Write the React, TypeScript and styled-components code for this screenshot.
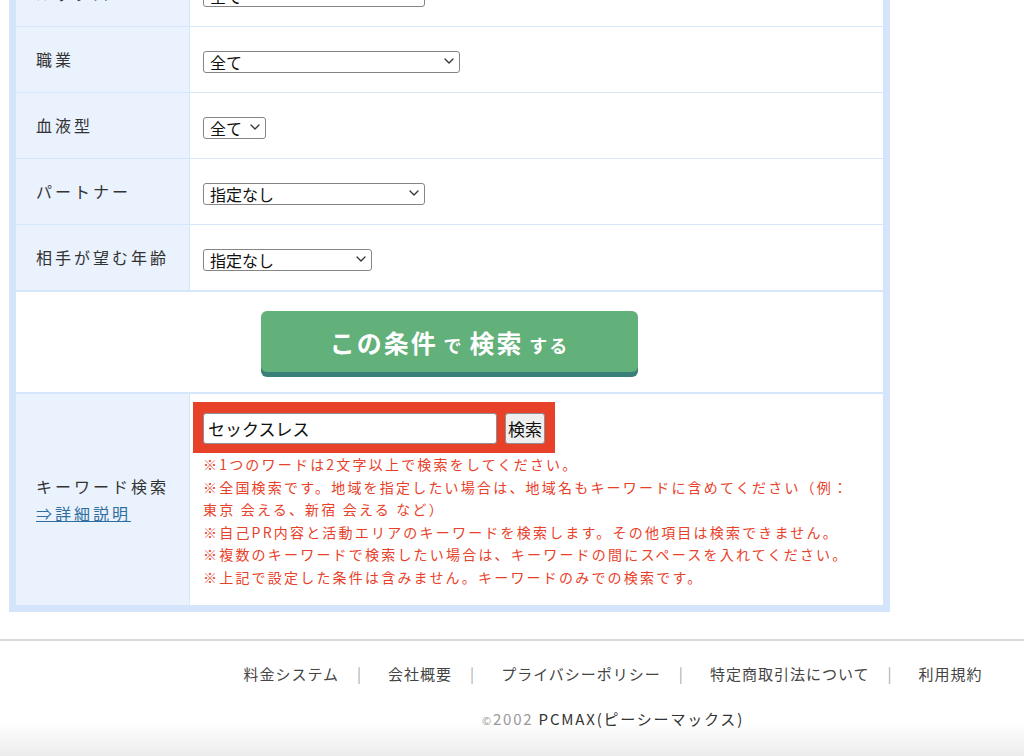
import React from 'react';
import styled, { createGlobalStyle } from 'styled-components';

const GlobalStyle = createGlobalStyle`
    body {
        margin: 0;
        background: #fff;
        color: #333;
        font-family: "Noto Sans CJK JP", "Noto Sans", sans-serif;
        overflow: hidden;
    }
`;

type Field = { label: string; value: string; width: number };

const fields: Field[] = [
    { label: 'ルックス', value: '全て', width: 222 },
    { label: '職業', value: '全て', width: 257 },
    { label: '血液型', value: '全て', width: 63 },
    { label: 'パートナー', value: '指定なし', width: 222 },
    { label: '相手が望む年齢', value: '指定なし', width: 169 },
];

const notes = [
    '※1つのワードは2文字以上で検索をしてください。',
    '※全国検索です。地域を指定したい場合は、地域名もキーワードに含めてください（例：東京 会える、新宿 会える など）',
    '※自己PR内容と活動エリアのキーワードを検索します。その他項目は検索できません。',
    '※複数のキーワードで検索したい場合は、キーワードの間にスペースを入れてください。',
    '※上記で設定した条件は含みません。キーワードのみでの検索です。',
];

const footerLinks = ['料金システム', '会社概要', 'プライバシーポリシー', '特定商取引法について', '利用規約'];

const Chevron = () => (
    <svg width="10" height="6" viewBox="0 0 10 6" fill="none">
        <path d="M1 1l4 4 4-4" stroke="#333" strokeWidth="1.3" strokeLinecap="round" strokeLinejoin="round" />
    </svg>
);

const App = () => {
    return (
        <>
            <GlobalStyle />
            <Main>
                <Table>
                    {fields.map((f, i) => (
                        <Row key={f.label} $line={i === fields.length - 1 ? 2 : 1}>
                            <Label>{f.label}</Label>
                            <Value>
                                <SelectWrap $w={f.width}>
                                    <Select defaultValue={f.value}>
                                        <option>{f.value}</option>
                                    </Select>
                                    <ChevronBox>
                                        <Chevron />
                                    </ChevronBox>
                                </SelectWrap>
                            </Value>
                        </Row>
                    ))}
                    <ButtonRow>
                        <SearchButton type="button">
                            <Big>この条件</Big> <Small>で</Small> <Big>検索</Big> <Small>する</Small>
                        </SearchButton>
                    </ButtonRow>
                    <Row $line={0}>
                        <Label>
                            <span>キーワード検索</span>
                            <HelpLink href="#">⇒詳細説明</HelpLink>
                        </Label>
                        <KeywordValue>
                            <Highlight onSubmit={(e) => e.preventDefault()}>
                                <KeywordInput defaultValue="セックスレス" />
                                <GrayButton type="submit">検索</GrayButton>
                            </Highlight>
                            <Notes>
                                {notes.map((n) => (
                                    <li key={n}>{n}</li>
                                ))}
                            </Notes>
                        </KeywordValue>
                    </Row>
                </Table>
            </Main>
            <Footer>
                <FooterLinks>
                    {footerLinks.map((l, i) => (
                        <React.Fragment key={l}>
                            {i > 0 && <Sep>|</Sep>}
                            <FooterLink href="#">{l}</FooterLink>
                        </React.Fragment>
                    ))}
                </FooterLinks>
                <Copyright>
                    <Muted>
                        <CopyMark>©</CopyMark>2002
                    </Muted>{' '}
                    PCMAX(ピーシーマックス)
                </Copyright>
            </Footer>
        </>
    );
};

const Main = styled.main`
    margin-top: -46px;
    padding-left: 9px;
`;

const Table = styled.div`
    width: 881px;
    box-sizing: border-box;
    border: 7px solid #d3e4fb;
    background: #fff;
`;

const Row = styled.div<{ $line: number }>`
    display: flex;
    min-height: 65px;
    border-bottom: ${(p) => p.$line}px solid #d6e6fb;
`;

const Label = styled.div`
    width: 174px;
    flex-shrink: 0;
    box-sizing: border-box;
    padding-left: 20px;
    background: #eaf2fd;
    border-right: 1px solid #d6e6fb;
    display: flex;
    flex-direction: column;
    justify-content: center;
    font-size: 16px;
    line-height: 27px;
    letter-spacing: 3px;
    color: #333;
`;

const Value = styled.div`
    flex: 1;
    display: flex;
    align-items: center;
    padding: 2px 12px 0 13px;
`;

const SelectWrap = styled.span<{ $w: number }>`
    position: relative;
    display: inline-block;
    width: ${(p) => p.$w}px;
    height: 22px;
`;

const Select = styled.select`
    appearance: none;
    width: 100%;
    height: 22px;
    box-sizing: border-box;
    margin: 0;
    padding: 0 22px 0 6px;
    border: 1px solid #858585;
    border-radius: 3px;
    background: #fff;
    color: #111;
    font-family: inherit;
    font-size: 16px;
    line-height: 20px;
`;

const ChevronBox = styled.span`
    position: absolute;
    right: 6px;
    top: 8px;
    display: flex;
    pointer-events: none;
`;

const ButtonRow = styled.div`
    display: flex;
    justify-content: center;
    padding: 19px 0 15px;
    border-bottom: 2px solid #d6e6fb;
`;

const SearchButton = styled.button`
    width: 377px;
    height: 61px;
    margin-bottom: 5px;
    border: none;
    border-radius: 6px;
    background: #62b07a;
    box-shadow: 0 5px 0 #3b7f7b;
    color: #fff;
    font-family: inherit;
    font-weight: 700;
    font-size: 17px;
    letter-spacing: 2px;
    cursor: pointer;
`;

const Big = styled.span`
    font-size: 25px;
`;

const Small = styled.span`
    font-size: 18px;
`;

const HelpLink = styled.a`
    color: #2e6fa0;
    text-decoration: underline;
`;

const KeywordValue = styled.div`
    flex: 1;
    padding: 8px 25px 17px 3px;
`;

const Highlight = styled.form`
    display: flex;
    width: max-content;
    gap: 8px;
    margin: 0;
    padding: 11px 10px 9px;
    background: #e8412a;
`;

const KeywordInput = styled.input`
    width: 294px;
    height: 31px;
    box-sizing: border-box;
    margin: 0;
    padding: 0 4px;
    border: 1px solid #8f8f8f;
    border-radius: 3px;
    background: #fff;
    color: #111;
    font-family: inherit;
    font-size: 17px;
`;

const GrayButton = styled.button`
    width: 40px;
    height: 31px;
    box-sizing: border-box;
    margin: 0;
    padding: 0;
    border: 1px solid #8f8f8f;
    border-radius: 3px;
    background: #efefef;
    color: #111;
    font-family: inherit;
    font-size: 17px;
`;

const Notes = styled.ul`
    margin: 0 0 0 10px;
    padding: 0;
    list-style: none;
    color: #e8412a;
    font-size: 14px;
    line-height: 22.5px;
    letter-spacing: 2.2px;
`;

const Footer = styled.footer`
    margin-top: 27px;
    height: 115px;
    padding-left: 202px;
    border-top: 2px solid #d9d9d9;
    background: linear-gradient(#fff 70%, #ececec);
    text-align: center;
    font-size: 15px;
    color: #444;
`;

const FooterLinks = styled.div`
    padding-top: 22px;
    line-height: 22px;
    letter-spacing: 1px;
`;

const FooterLink = styled.a`
    color: #444;
    text-decoration: none;
`;

const Sep = styled.span`
    margin: 0 26px 0 18px;
    color: #aaa;
`;

const Copyright = styled.div`
    margin-top: 23px;
    line-height: 22px;
    letter-spacing: 1.8px;
    color: #333;
`;

const Muted = styled.span`
    color: #999;
`;

const CopyMark = styled.span`
    font-size: 11px;
`;

export default App;
